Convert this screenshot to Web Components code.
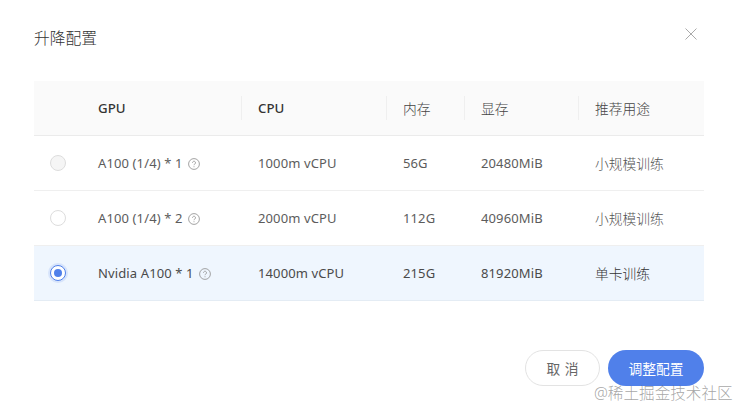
<!DOCTYPE html>
<html lang="zh">
<head>
<meta charset="utf-8">
<title>升降配置</title>
<style>
  html, body { margin: 0; height: 100%; background: #fff; }
  body { font-family: "Noto Sans", "Noto Sans CJK SC", sans-serif; overflow: hidden; }
</style>
</head>
<body>
<upgrade-dialog heading="升降配置">
  <config-table>
    <config-head></config-head>
    <config-row gpu="A100 (1/4) * 1" cpu="1000m vCPU" mem="56G" vram="20480MiB" use="小规模训练" state="disabled"></config-row>
    <config-row gpu="A100 (1/4) * 2" cpu="2000m vCPU" mem="112G" vram="40960MiB" use="小规模训练"></config-row>
    <config-row gpu="Nvidia A100 * 1" cpu="14000m vCPU" mem="215G" vram="81920MiB" use="单卡训练" state="selected"></config-row>
  </config-table>
</upgrade-dialog>
<script>
const COLS = '48px 160px 145px 78px 114px 125px';

class UpgradeDialog extends HTMLElement {
  constructor() {
    super();
    this.attachShadow({ mode: 'open' });
  }
  connectedCallback() {
    this.shadowRoot.innerHTML = `
      <style>
        :host { display: block; box-sizing: border-box; height: 407px; padding: 28px 34px 0; position: relative; color: #333; }
        header { display: flex; justify-content: space-between; height: 53px; }
        h1 { margin: 0; font-size: 15.75px; font-weight: 300; line-height: 20px; color: #333; }
        .close { width: 12px; height: 12px; margin: 0 7px 0 0; padding: 0; border: 0; background: none; display: block; }
        .close svg { display: block; }
        footer { display: flex; justify-content: flex-end; gap: 8px; margin-top: 49px; }
        button.btn { box-sizing: border-box; height: 36px; border-radius: 18px; font: inherit; font-size: 13.75px; padding: 0; }
        .cancel { width: 75px; border: 1px solid #e3e3e3; background: #fff; color: #666; word-spacing: 1px; }
        .ok { width: 96px; border: 0; background: #5080ea; color: #fff; }
        .mark { position: absolute; left: 594px; top: 383px; font-size: 15.6px; font-weight: 300; line-height: 20px; color: rgba(110,110,110,.62); white-space: nowrap; }
      </style>
      <header>
        <h1>${this.getAttribute('heading')}</h1>
        <button class="close" aria-label="关闭">
          <svg width="12" height="12" viewBox="0 0 12 12"><path d="M.5.5l11 11M11.5.5l-11 11" stroke="#aaa" stroke-width="1" fill="none"/></svg>
        </button>
      </header>
      <slot></slot>
      <footer>
        <button class="btn cancel">取 消</button>
        <button class="btn ok">调整配置</button>
      </footer>
      <div class="mark">@稀土掘金技术社区</div>
    `;
  }
}

class ConfigTable extends HTMLElement {
  constructor() {
    super();
    this.attachShadow({ mode: 'open' });
  }
  connectedCallback() {
    this.shadowRoot.innerHTML = `
      <style>:host { display: block; width: 670px; font-size: 13px; letter-spacing: .12px; }</style>
      <slot></slot>
    `;
  }
}

class ConfigHead extends HTMLElement {
  constructor() {
    super();
    this.attachShadow({ mode: 'open' });
  }
  connectedCallback() {
    const cols = ['GPU', 'CPU', '内存', '显存', '推荐用途'];
    this.shadowRoot.innerHTML = `
      <style>
        :host { display: grid; grid-template-columns: ${COLS}; height: 55px; box-sizing: border-box; background: #fafafa; border-bottom: 1px solid #ebebeb; }
        div { display: flex; align-items: center; padding-left: 16px; position: relative; color: #333; font-size: 13.25px; letter-spacing: 0; }
        div.cjk { color: #444; font-size: 13.75px; font-weight: 300; }
        div + div + div::before { content: ''; position: absolute; left: -1px; top: 15px; height: 24px; width: 1px; background: #efefef; }
        b { font-weight: 500; }
      </style>
      <div></div>
      ${cols.map(c => /[A-Z]/.test(c) ? `<div><b>${c}</b></div>` : `<div class="cjk">${c}</div>`).join('')}
    `;
  }
}

class ConfigRow extends HTMLElement {
  constructor() {
    super();
    this.attachShadow({ mode: 'open' });
  }
  connectedCallback() {
    const a = n => this.getAttribute(n);
    const state = a('state') || '';
    this.shadowRoot.innerHTML = `
      <style>
        :host { display: grid; grid-template-columns: ${COLS}; height: 55px; box-sizing: border-box; border-bottom: 1px solid #efefef; color: #5c5c5c; }
        :host([state="selected"]) { background: #eff6fe; border-bottom-color: #e4ecf4; color: #4a4a4a; }
        div { display: flex; align-items: center; padding-left: 16px; white-space: nowrap; }
        .use { font-size: 13.75px; letter-spacing: 0; color: #555; font-weight: 300; }
        :host([state="selected"]) .use { color: #333; }
        .radio { width: 14px; height: 14px; border: 1px solid #ddd; border-radius: 50%; background: #fff; }
        .disabled { background: #f5f5f5; }
        .selected { border-color: #5080ea; display: flex; align-items: center; justify-content: center; box-shadow: 0 0 0 2px rgba(80,128,234,.15); }
        .selected::after { content: ''; width: 8px; height: 8px; border-radius: 50%; background: #5080ea; }
        svg { margin: 1px 0 0 5px; flex: none; }
      </style>
      <div><span class="radio ${state}"></span></div>
      <div>${a('gpu')}
        <svg width="12" height="12" viewBox="0 0 12 12" fill="none" stroke="#999">
          <circle cx="6" cy="6" r="5.4" stroke-width=".9"/>
          <path d="M4.5 4.7a1.5 1.5 0 1 1 2.3 1.3c-.5.3-.8.6-.8 1.2" stroke-width=".9"/>
          <path d="M6 8.3v.9" stroke-width=".9"/>
        </svg>
      </div>
      <div>${a('cpu')}</div>
      <div>${a('mem')}</div>
      <div>${a('vram')}</div>
      <div class="use">${a('use')}</div>
    `;
  }
}

customElements.define('upgrade-dialog', UpgradeDialog);
customElements.define('config-table', ConfigTable);
customElements.define('config-head', ConfigHead);
customElements.define('config-row', ConfigRow);
</script>
</body>
</html>
